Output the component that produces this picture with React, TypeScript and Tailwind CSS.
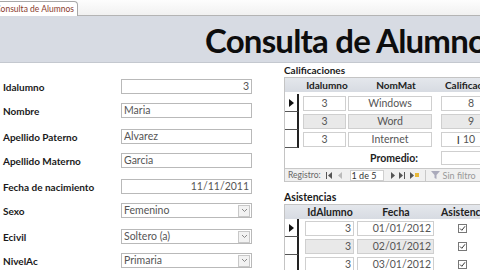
import React from "react";

const font = { fontFamily: "Lato, 'Open Sans', sans-serif" };

function Field({ label, value, align = "left", combo = false, mt }: { label: string; value: string; align?: "left" | "right"; combo?: boolean; mt: string }) {
  return (
    <div className={`flex items-center h-[15px] ${mt}`}>
      <div className="w-[121px] pl-[3px] text-[10px] font-bold text-[#1a1a1a] leading-none">{label}</div>
      <div className={`w-[131px] h-[15px] border border-[#b9b9b9] bg-white flex items-center text-[10.5px] text-[#555] leading-none ${align === "right" ? "justify-end pr-[2px]" : "pl-[2px]"}`}>
        <span className="flex-1 truncate" style={{ textAlign: align }}>{value}</span>
        {combo && (
          <div className="w-[12px] h-[12px] mr-[1px] border border-[#c8c8c8] bg-[#f2f2f2] flex items-center justify-center">
            <svg width="7" height="5" viewBox="0 0 7 5"><path d="M1 1 L3.5 3.5 L6 1" stroke="#888" strokeWidth="1" fill="none" /></svg>
          </div>
        )}
      </div>
    </div>
  );
}

function Selector({ current }: { current?: boolean }) {
  return (
    <div className="w-[14px] shrink-0 h-full border-r-2 border-[#222] border-b border-b-[#555] flex items-center justify-center">
      {current && <svg width="5" height="8" viewBox="0 0 5 8"><path d="M0 0 L5 4 L0 8 Z" fill="#111" /></svg>}
    </div>
  );
}

function Cell({ w, ml, children, align, gray }: { w: string; ml: string; children: React.ReactNode; align: "center" | "right"; gray?: boolean }) {
  return (
    <div className={`${w} ${ml} shrink-0 h-[15px] border border-[#cfcfcf] ${gray ? "bg-[#e9e9e9]" : "bg-white"} flex items-center text-[10.5px] text-[#555] leading-none ${align === "right" ? "justify-end pr-[2px]" : "justify-center"}`}>
      {children}
    </div>
  );
}

function Check() {
  return (
    <svg width="9" height="9" viewBox="0 0 9 9">
      <rect x="0.5" y="0.5" width="8" height="8" fill="white" stroke="#777" />
      <path d="M2 4.5 L3.8 6.3 L7 2.3" stroke="#333" strokeWidth="1" fill="none" />
    </svg>
  );
}

export default function App() {
  const cal = [
    ["3", "Windows", "8"],
    ["3", "Word", "9"],
    ["3", "Internet", "10"],
  ];
  const asis = ["01/01/2012", "02/01/2012", "03/01/2012"];
  return (
    <div className="w-[480px] h-[270px] overflow-hidden bg-white flex flex-col" style={font}>
      {/* tab strip */}
      <div className="h-[16px] shrink-0 bg-gradient-to-b from-[#fdfdfd] to-[#f1f1f1] border-b border-[#b4b4b4] flex items-end">
        <div className="h-[15px] w-[78px] bg-white border-t border-r border-[#a8a8a8] rounded-tr-[4px] flex items-center overflow-hidden -mb-px">
          <span className="text-[8.5px] text-[#8a3b2e] whitespace-nowrap ml-[-5px] leading-none">Consulta de Alumnos</span>
        </div>
      </div>
      {/* header */}
      <div className="h-[47px] shrink-0 bg-[#d7dbe3] border-b border-[#c4c8cf] flex items-center overflow-hidden">
        <div className="pl-[205px] whitespace-nowrap text-[33px] font-bold text-[#0d0d0d] leading-none tracking-[-0.8px] mt-[2px]">Consulta de Alumnos</div>
      </div>
      {/* body */}
      <div className="flex flex-1 min-h-0">
        <div className="w-[283px] shrink-0 flex flex-col pt-[16px]">
          <Field label="Idalumno" value="3" align="right" mt="" />
          <Field label="Nombre" value="Maria" mt="mt-[9px]" />
          <Field label="Apellido Paterno" value="Alvarez" mt="mt-[11px]" />
          <Field label="Apellido Materno" value="Garcia" mt="mt-[9px]" />
          <Field label="Fecha de nacimiento" value="11/11/2011" align="right" mt="mt-[11px]" />
          <Field label="Sexo" value="Femenino" combo mt="mt-[9px]" />
          <Field label="Ecivil" value="Soltero (a)" combo mt="mt-[11px]" />
          <Field label="NivelAc" value="Primaria" combo mt="mt-[9px]" />
        </div>
        <div className="flex-1 min-w-0 flex flex-col pl-[1px]">
          {/* Calificaciones */}
          <div className="h-[13px] mt-[1px] text-[10px] font-bold text-[#1a1a1a] leading-[13px]">Calificaciones</div>
          <div className="border-l border-t border-[#c4c4c4] w-[220px] shrink-0 flex flex-col">
            <div className="h-[14px] bg-gradient-to-b from-[#e4e7ec] to-[#d7dbe2] flex items-center text-[10px] font-bold text-[#222] leading-none whitespace-nowrap">
              <div className="w-[14px] shrink-0" />
              <div className="w-[46px] shrink-0 ml-[5px] text-center">Idalumno</div>
              <div className="w-[84px] shrink-0 ml-[4px] text-center">NomMat</div>
              <div className="ml-[7px] shrink-0">Calificación</div>
            </div>
            <div className="h-[2px]" />
            {cal.map((r, i) => (
              <div key={i} className="h-[18px] flex items-center">
                <Selector current={i === 0} />
                <Cell w="w-[43px]" ml="ml-[4px]" align="center" gray={i === 1}>{r[0]}</Cell>
                <Cell w="w-[84px]" ml="ml-[2px]" align="center" gray={i === 1}>{r[1]}</Cell>
                <Cell w="w-[60px]" ml="ml-[9px]" align="center" gray={i === 1}>
                  {i === 2 ? (
                    <span className="flex items-center gap-[3px]"><span className="text-[#333] text-[11px] -ml-[10px]">I</span>{r[2]}</span>
                  ) : r[2]}
                </Cell>
              </div>
            ))}
            <div className="h-[20px] flex items-center">
              <div className="w-[146px] shrink-0 text-right text-[10.5px] font-bold text-[#222] leading-none pr-[13px]">Promedio:</div>
              <div className="ml-[10px] w-[60px] shrink-0 h-[14px] border border-[#cfcfcf] bg-white" />
            </div>
            <div className="h-[14px] bg-[#f0f0f0] border-t border-b border-[#c8c8c8] flex items-center text-[8.5px] text-[#666] leading-none whitespace-nowrap">
              <span className="ml-[3px]">Registro:</span>
              <svg className="ml-[5px] shrink-0" width="7" height="7" viewBox="0 0 7 7"><rect x="0" y="0" width="1" height="7" fill="#555" /><path d="M6 0 L2 3.5 L6 7 Z" fill="#555" /></svg>
              <svg className="ml-[5px] shrink-0" width="5" height="7" viewBox="0 0 5 7"><path d="M4 0 L0 3.5 L4 7 Z" fill="#bbb" /></svg>
              <div className="ml-[7px] w-[34px] shrink-0 h-[11px] bg-white border border-[#cfcfcf] flex items-center pl-[1px] text-[#333] text-[9px]">1 de 5</div>
              <svg className="ml-[6px] shrink-0" width="5" height="7" viewBox="0 0 5 7"><path d="M1 0 L5 3.5 L1 7 Z" fill="#555" /></svg>
              <svg className="ml-[4px] shrink-0" width="7" height="7" viewBox="0 0 7 7"><path d="M0 0 L4 3.5 L0 7 Z" fill="#555" /><rect x="5" y="0" width="1" height="7" fill="#555" /></svg>
              <svg className="ml-[4px] shrink-0" width="10" height="7" viewBox="0 0 10 7"><path d="M0 0 L4 3.5 L0 7 Z" fill="#555" /><rect x="5" y="1" width="4" height="4" fill="#e8b838" /></svg>
              <div className="ml-[5px] w-px h-[11px] bg-[#c8c8c8] shrink-0" />
              <svg className="ml-[5px] shrink-0" width="9" height="8" viewBox="0 0 9 8"><path d="M0 0 L9 0 L5.5 4 L5.5 8 L3.5 7 L3.5 4 Z" fill="#aab" /></svg>
              <span className="ml-[3px] text-[#999] text-[9px]">Sin filtro</span>
              <div className="ml-[4px] w-px h-[11px] bg-[#c8c8c8] shrink-0" />
            </div>
          </div>
          {/* Asistencias */}
          <div className="h-[13px] mt-[9px] text-[10.5px] font-bold text-[#1a1a1a] leading-[13px]">Asistencias</div>
          <div className="border-l border-t border-[#c4c4c4] w-[220px] shrink-0 flex flex-col">
            <div className="h-[14px] bg-gradient-to-b from-[#e4e7ec] to-[#d7dbe2] flex items-center text-[10.5px] font-bold text-[#222] leading-none whitespace-nowrap">
              <div className="w-[14px] shrink-0" />
              <div className="w-[48px] shrink-0 ml-[7px] text-center">IdAlumno</div>
              <div className="w-[76px] shrink-0 ml-[4px] text-center">Fecha</div>
              <div className="ml-[7px] shrink-0">Asistencia</div>
            </div>
            {asis.map((d, i) => (
              <div key={i} className="h-[18px] flex items-center">
                <Selector current={i === 0} />
                <Cell w="w-[49px]" ml="ml-[6px]" align="right" gray={i === 1}>3</Cell>
                <Cell w="w-[77px]" ml="ml-[3px]" align="right" gray={i === 1}>{d}</Cell>
                <div className="ml-[24px] shrink-0 flex items-center"><Check /></div>
              </div>
            ))}
          </div>
        </div>
      </div>
    </div>
  );
}
